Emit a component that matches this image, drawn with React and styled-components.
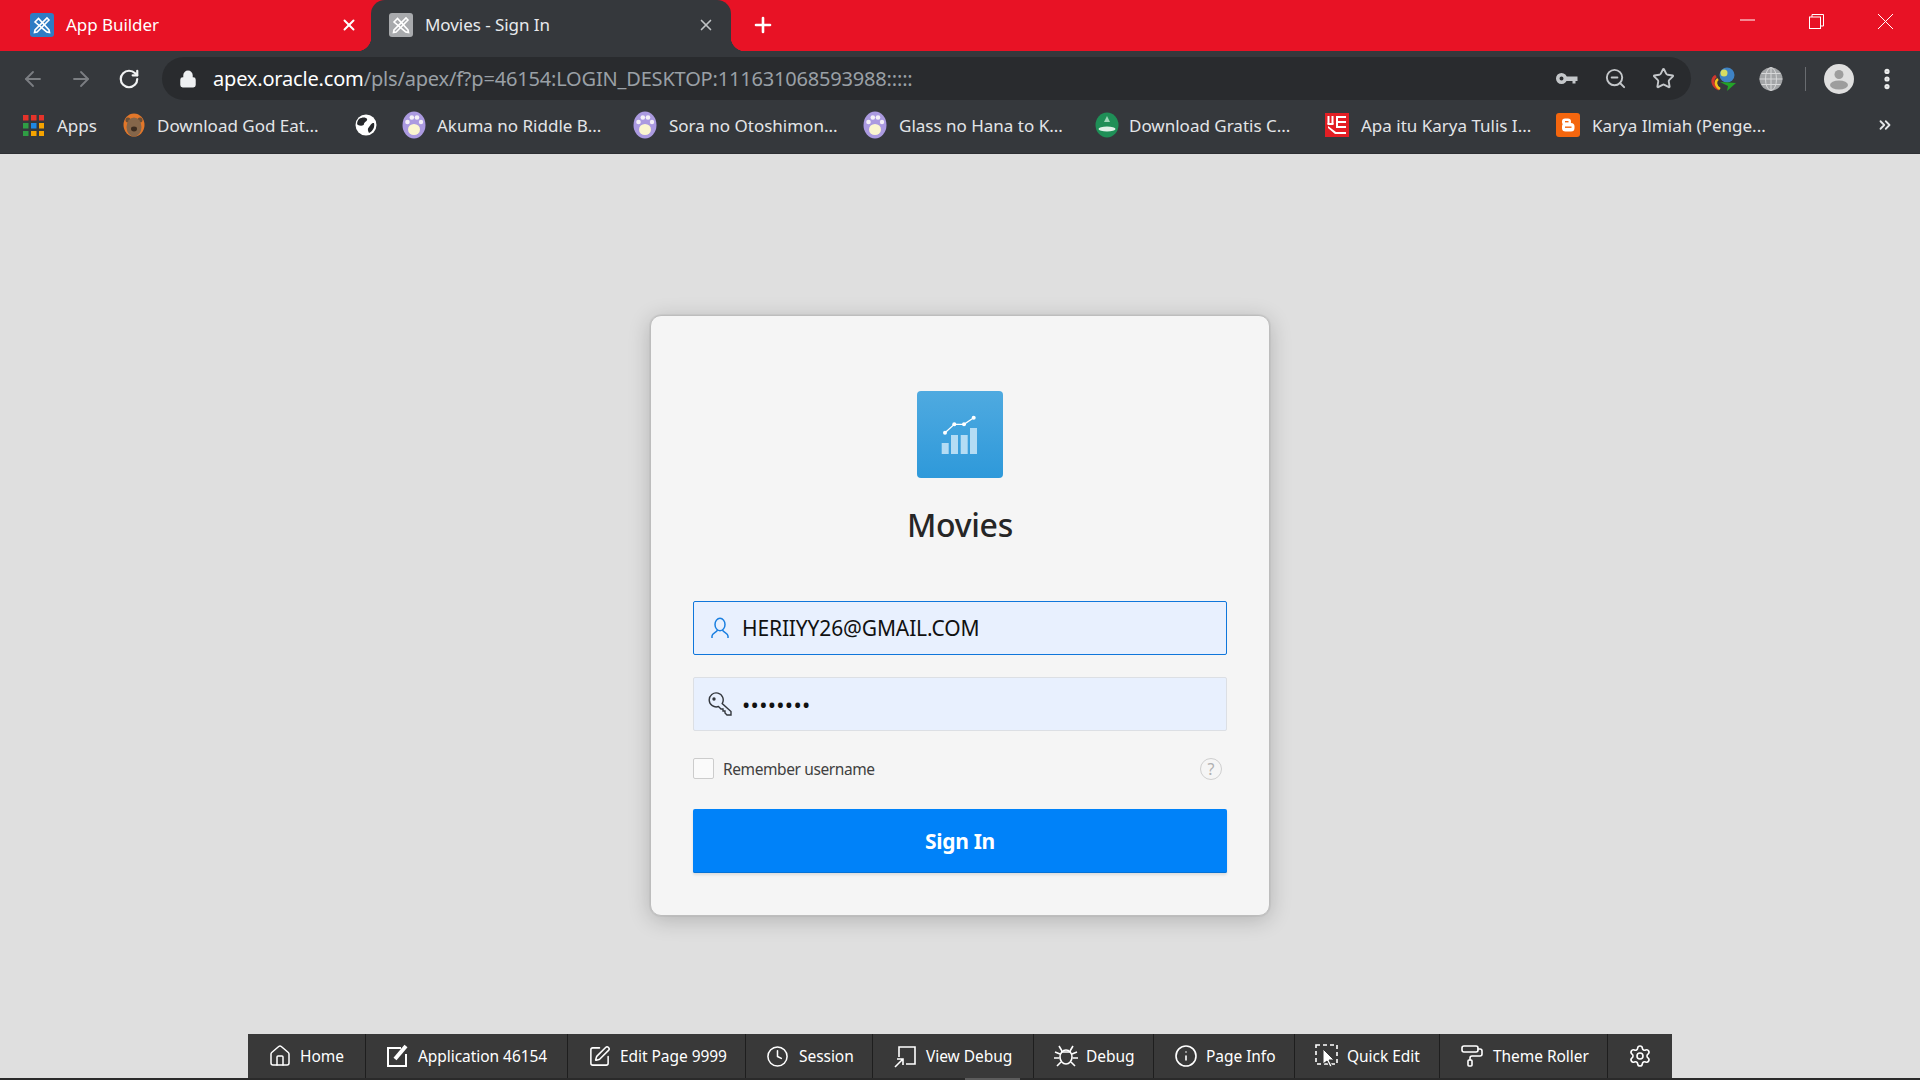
import React from 'react';
import styled, { createGlobalStyle } from 'styled-components';
import { ArrowLeft, ArrowRight, RotateCw, Lock, X, Plus, Star, ZoomOut, EllipsisVertical, ChevronsRight, House, SquarePen, Clock, Info, PaintRoller, Settings } from 'lucide-react';

const GlobalStyle = createGlobalStyle`
html, body {
    margin: 0;
    padding: 0;
    height: 100%;
    overflow: hidden;
    background: #dfdfdf;
    font-family: "Noto Sans", "Open Sans", sans-serif;
}
* { box-sizing: border-box; }
svg { flex-shrink: 0; }
`;

const Page = styled.div`
display: flex;
flex-direction: column;
width: 1920px;
height: 1080px;
`;

/* browser chrome */
const TabStrip = styled.div`
display: flex;
align-items: stretch;
height: 51px;
background: #e81225;
flex-shrink: 0;
`;
const Tab = styled.div`
position: relative;
display: flex;
align-items: center;
gap: 12px;
width: ${({ $w }) => $w}px;
padding: 0 ${({ $right }) => $right}px 2px ${({ $left }) => $left}px;
color: #fff;
font-size: 17px;
letter-spacing: -0.05px;
${({ $active }) => $active && `
    background: #35383c;
    border-radius: 14px 14px 0 0;
    color: #e8eaed;
    &::before, &::after {
        content: '';
        position: absolute;
        bottom: 0;
        width: 14px;
        height: 14px;
    }
    &::before {
        left: -14px;
        background: radial-gradient(circle at 0 0, transparent 14px, #35383c 14.5px);
    }
    &::after {
        right: -14px;
        background: radial-gradient(circle at 100% 0, transparent 14px, #35383c 14.5px);
    }
`}
`;
const TabTitle = styled.span`
flex: 1;
white-space: nowrap;
`;
const NewTab = styled.div`
display: flex;
align-items: center;
margin-left: 20px;
padding-bottom: 2px;
color: #fff;
`;
const WindowControls = styled.div`
display: flex;
align-items: flex-start;
margin-left: auto;
padding: 14px 27px 0 0;
gap: 54px;
color: #fff;
`;
const Toolbar = styled.div`
display: flex;
align-items: center;
height: 49px;
background: #35383c;
padding: 6px 0 0 21px;
flex-shrink: 0;
`;
const NavButton = styled.div`
display: flex;
justify-content: center;
width: 24px;
margin-right: 24px;
color: ${({ $on }) => ($on ? '#f1f3f4' : '#7b7e82')};
`;
const Omnibox = styled.div`
display: flex;
align-items: center;
width: 1529px;
height: 43px;
margin-left: -3px;
padding: 0 4px 0 17px;
background: #292b2e;
border-radius: 22px;
`;
const Url = styled.div`
flex: 1;
margin-left: 16px;
font-size: 20px;
letter-spacing: -0.18px;
color: #9aa0a6;
white-space: nowrap;
`;
const Host = styled.span`
color: #fff;
`;
const OmniIcon = styled.div`
display: flex;
justify-content: center;
width: 48px;
color: #c4c7ca;
`;
const Extensions = styled.div`
display: flex;
align-items: center;
margin-left: 20px;
gap: 22px;
`;
const Divider = styled.div`
width: 1px;
height: 24px;
margin-right: -4px;
background: #696c70;
`;
const MenuDots = styled.div`
display: flex;
margin-left: 20px;
color: #eceded;
`;
const Bookmarks = styled.div`
display: flex;
align-items: center;
height: 54px;
padding: 0 0 3px 23px;
background: #35383c;
border-bottom: 1px solid #2d2f33;
flex-shrink: 0;
`;
const Bookmark = styled.div`
display: flex;
align-items: center;
gap: ${({ $gap }) => $gap}px;
width: ${({ $w }) => $w}px;
color: #e3e5e8;
font-size: 17px;
letter-spacing: 0;
white-space: nowrap;
`;
const More = styled.div`
display: flex;
margin-left: auto;
padding-right: 26px;
color: #e3e5e8;
`;

/* login */
const Main = styled.main`
flex: 1;
display: flex;
flex-direction: column;
align-items: center;
padding-top: 161px;
background: #dfdfdf;
`;
const Card = styled.div`
width: 620px;
height: 601px;
padding: 75px 42px 0;
background: #f5f5f5;
border: 1px solid #bdbdbd;
border-radius: 11px;
box-shadow: 0 0 0 1px rgba(0, 0, 0, 0.04), 0 4px 22px rgba(0, 0, 0, 0.2);
display: flex;
flex-direction: column;
`;
const LogoBox = styled.div`
display: flex;
align-self: center;
width: 86px;
height: 87px;
border-radius: 4px;
background: linear-gradient(#4faae0, #2e99da);
`;
const Title = styled.h1`
margin: 23px 0 52px;
height: 48px;
line-height: 48px;
text-align: center;
font-size: 32px;
font-weight: 500;
letter-spacing: -0.3px;
color: #262626;
`;
const Field = styled.div`
display: flex;
align-items: center;
gap: 10px;
height: 54px;
margin-bottom: 22px;
padding-left: 14px;
background: #e8f0fe;
border: 1px solid ${({ $focus }) => ($focus ? '#0f76db' : '#dcdfe4')};
border-radius: 2px;
`;
const FieldIcon = styled.div`
display: flex;
justify-content: center;
width: 24px;
`;
const Input = styled.input`
flex: 1;
min-width: 0;
border: 0;
outline: 0;
padding: 0;
background: transparent;
font-family: inherit;
font-size: 21px;
letter-spacing: -0.14px;
color: #111;
&[type='password'] {
    font-size: 22px;
    letter-spacing: 0.3px;
}
`;
const Remember = styled.div`
display: flex;
align-items: center;
height: 21px;
margin-top: 5px;
`;
const Checkbox = styled.div`
width: 21px;
height: 21px;
border: 1px solid #cccccc;
border-radius: 2px;
background: #fafafa;
`;
const RememberLabel = styled.span`
margin-left: 9px;
font-size: 15.5px;
letter-spacing: -0.4px;
color: #404040;
`;
const Help = styled.div`
display: flex;
align-items: center;
justify-content: center;
width: 22px;
height: 22px;
margin: 0 5px 0 auto;
border: 1.5px solid #cfcfcf;
border-radius: 50%;
font-size: 16px;
color: #b0b0b0;
`;
const SignIn = styled.button`
height: 64px;
margin-top: 30px;
border: 0;
border-radius: 2px;
background: #0082f9;
box-shadow: 0 -1px 0 #0572d6 inset, 0 2px 3px rgba(0, 0, 0, 0.1);
color: #fff;
font-family: inherit;
font-size: 21px;
font-weight: 700;
letter-spacing: -0.3px;
`;

/* developer bar */
const DevBar = styled.div`
display: flex;
align-self: center;
width: 1424px;
height: 44px;
background: #393939;
flex-shrink: 0;
`;
const DevItem = styled.div`
display: flex;
align-items: center;
gap: ${({ $gap }) => $gap}px;
width: ${({ $w }) => $w}px;
padding-left: 20px;
border-right: 1px solid #1e1e1e;
color: #fff;
font-size: 15.5px;
letter-spacing: -0.05px;
white-space: nowrap;
&:last-child { border-right: 0; }
`;
const ScrollTrack = styled.div`
height: 2px;
background: #2a2a2a;
flex-shrink: 0;
`;
const ScrollThumb = styled.div`
width: 55px;
height: 2px;
margin-left: 965px;
background: #5c5c5c;
`;

const AppIcon = ({ grey }) => (
    <svg width="24" height="24" viewBox="0 0 24 24">
        <rect width="24" height="24" rx="3" fill={grey ? '#a8aaad' : '#2e7cc4'} />
        <g stroke="#fff" strokeWidth="1.6" fill="none" strokeLinecap="round">
            <path d="M5 9 8.5 5.5 19 17l.5 2.5-2.8-.6z" />
            <path d="M19 7 17 5 5 17l-.5 2.5 2.6-.5L19 7z" />
        </g>
    </svg>
);

const Paw = () => (
    <svg width="24" height="28" viewBox="0 0 24 28">
        <ellipse cx="12" cy="14" rx="11.5" ry="13.5" fill="#ab9ae0" />
        <ellipse cx="12" cy="18.5" rx="6" ry="5.500" fill="#fbf6cf" />
        <circle cx="5.500" cy="11" r="2.300" fill="#f4f0f6" />
        <circle cx="9.800" cy="6.500" r="2.300" fill="#f4f0f6" />
        <circle cx="15" cy="6.500" r="2.300" fill="#f4f0f6" />
        <circle cx="19" cy="11" r="2.200" fill="#f4f0f6" />
    </svg>
);

const AppsGrid = () => {
    const colors = ['#e5332a', '#e5332a', '#e5332a', '#2f9e44', '#1e88e5', '#f5a300', '#2f9e44', '#f5a300', '#f5a300'];
    return (
        <svg width="21" height="21" viewBox="0 0 21 21">
            {colors.map((c, i) => (
                <rect key={i} x={(i % 3) * 8} y={Math.floor(i / 3) * 8} width="5.5" height="5.5" fill={c} />
            ))}
        </svg>
    );
};

const Bear = () => (
    <svg width="22" height="24" viewBox="0 0 22 24">
        <ellipse cx="11" cy="12" rx="10.5" ry="11.5" fill="#e2772a" />
        <circle cx="5" cy="7" r="2.5" fill="#6d5037" />
        <circle cx="17" cy="7" r="2.5" fill="#6d5037" />
        <ellipse cx="11" cy="14" rx="7.5" ry="9.5" fill="#85664a" />
        <ellipse cx="11" cy="16" rx="3" ry="2.4" fill="#3c2c20" />
    </svg>
);

const GlobeBlob = () => (
    <svg width="22" height="22" viewBox="0 0 22 22">
        <circle cx="11" cy="11" r="10.5" fill="#fff" />
        <path d="M4 5c3-2 7-2 8 0s-3 3-3 5-4 2-6 1 0-5 1-6zM19 9c1 4-1 8-5 10-1-2-2-4 0-6s2-4 5-4z" fill="#26282b" />
    </svg>
);

const GreenBadge = () => (
    <svg width="24" height="26" viewBox="0 0 24 26">
        <ellipse cx="12" cy="13" rx="11.5" ry="12.5" fill="#1f8f57" />
        <ellipse cx="12" cy="17" rx="8.500" ry="2.400" fill="#dff0e7" />
        <path d="M12 4l3 6h-6z" fill="#9fd6b9" />
    </svg>
);

const RedLogo = () => (
    <svg width="24" height="24" viewBox="0 0 24 24">
        <rect width="24" height="24" fill="#e31e24" />
        <g fill="#fff">
            <rect x="2.5" y="3" width="2" height="8" />
            <rect x="6.5" y="3" width="2" height="8" />
            <rect x="2.5" y="10" width="6" height="2" />
            <rect x="11" y="3" width="2" height="10" />
            <rect x="11" y="3" width="10" height="2" />
            <rect x="11" y="8" width="10" height="2" />
            <rect x="11" y="13" width="10" height="2" />
            <path d="M3 13l8 6h10v2H10L3 15z" />
        </g>
    </svg>
);

const Blogger = () => (
    <svg width="24" height="24" viewBox="0 0 24 24">
        <rect width="24" height="24" rx="3" fill="#f4660e" />
        <rect x="6" y="5.5" width="9" height="6.5" rx="3" fill="#fff" />
        <rect x="6" y="10" width="12.5" height="8.5" rx="3.5" fill="#fff" />
        <rect x="9" y="8" width="3.5" height="1.4" fill="#f4660e" />
        <rect x="9" y="13.5" width="6.5" height="1.4" fill="#f4660e" />
    </svg>
);

const KeyGlyph = () => (
    <svg width="22" height="12" viewBox="0 0 22 12">
        <path d="M5.5 0a5.5 5.5 0 1 1-.01 11A5.5 5.5 0 0 1 5.500 0zM5.500 3.500a2 2 0 1 0 .01 4 2 2 0 0 0-.01-4z" fill="#c4c7ca" fillRule="evenodd" />
        <path d="M10 3.500h11.500V8h-2v2.500h-3V8H10z" fill="#c4c7ca" />
    </svg>
);

const IdmIcon = () => (
    <svg width="26" height="26" viewBox="0 0 26 26">
        <path d="M8 23C1 20 0 13 5 10" fill="none" stroke="#d1382e" strokeWidth="3" />
        <path d="M9 23C4 20 4 15 7 13" fill="none" stroke="#f3c21b" strokeWidth="2.500" />
        <circle cx="16" cy="9" r="7.500" fill="#3e82c4" />
        <circle cx="13" cy="7" r="3.500" fill="#d8dd62" />
        <path d="M9 16l16 1-9 8 1-5z" fill="#23a428" />
    </svg>
);

const GlobeGrey = () => (
    <svg width="24" height="24" viewBox="0 0 24 24" fill="none">
        <circle cx="12" cy="12" r="11.500" fill="#a3a5a7" />
        <g stroke="#d7d8d9" strokeWidth="1">
            <ellipse cx="12" cy="12" rx="5.500" ry="11.500" />
            <path d="M12 .5v23M.5 12h23M2.500 6.500h19M2.500 17.500h19" />
        </g>
    </svg>
);

const Avatar = () => (
    <svg width="30" height="30" viewBox="0 0 30 30">
        <circle cx="15" cy="15" r="15" fill="#dfdfdf" />
        <circle cx="15" cy="10.500" r="4.500" fill="#9d9d9d" />
        <ellipse cx="15" cy="21" rx="9" ry="4.500" fill="#9d9d9d" />
    </svg>
);

const ChartLogo = () => (
    <svg width="86" height="87" viewBox="0 0 86 87">
        <g fill="#b4dcf4">
            <rect x="24.700" y="52" width="7" height="11" />
            <rect x="34" y="44" width="7" height="19" />
            <rect x="43.700" y="44" width="7" height="19" />
            <rect x="53" y="37" width="7" height="26" />
        </g>
        <path d="M28 41.700 37.300 33.300H47L56.700 26.700" fill="none" stroke="#fff" strokeWidth="1.300" />
        <g fill="#fff">
            <circle cx="28" cy="41.700" r="2" />
            <circle cx="37.300" cy="33.300" r="2" />
            <circle cx="47" cy="33.300" r="2" />
            <circle cx="56.700" cy="26.700" r="2" />
        </g>
    </svg>
);

const UserIcon = () => (
    <svg width="18" height="22" viewBox="0 0 18 22" fill="none" stroke="#1a7fe0" strokeWidth="1.500">
        <ellipse cx="9" cy="7.500" rx="5" ry="6.200" />
        <path d="M1 21v-2c0-3 4.500-3.500 5.500-6M17 21v-2c0-3-4.500-3.500-5.500-6" />
    </svg>
);

const KeyOutline = () => (
    <svg width="24" height="24" viewBox="0 0 24 24" fill="none" stroke="#33373d" strokeWidth="1.400">
        <path d="M14.200 11.500A7 7 0 1 0 10.500 14.500L13 17H15V19H17V21L19 23H23V19.500Z" />
        <circle cx="6" cy="7" r="1" fill="#33373d" />
    </svg>
);

const AppEditIcon = () => (
    <svg width="24" height="24" viewBox="0 0 24 24" fill="none" stroke="#fff">
        <path d="M15 4H2v18h18V10" strokeWidth="2" />
        <path d="M9 15 20 2" strokeWidth="4" />
    </svg>
);

const ViewDebugIcon = () => (
    <svg width="24" height="24" viewBox="0 0 24 24" fill="none" stroke="#fff" strokeWidth="1.600">
        <path d="M6 13V3h16v17H13" />
        <path d="M2 23 10 15M4 15h6v6" />
    </svg>
);

const BugIcon = () => (
    <svg width="24" height="24" viewBox="0 0 24 24" fill="none" stroke="#fff" strokeWidth="1.600">
        <ellipse cx="12" cy="13" rx="6" ry="7" />
        <path d="M8 7 5 2M16 7l3-5M6 10 1 8M18 10l5-2M5.500 14H0M18.500 14H24M7 18l-4 4M17 18l4 4M7 8h10" />
    </svg>
);

const QuickEditIcon = () => (
    <svg width="24" height="24" viewBox="0 0 24 24" fill="none">
        <rect x="1" y="1" width="21" height="19" stroke="#fff" strokeWidth="1.600" strokeDasharray="4 3" />
        <path d="M8 5v15l4-3 3 6 2-1-3-6h5z" fill="#fff" stroke="#393939" />
    </svg>
);

const bookmarks = [
    { w: 232, gap: 12, icon: <Bear />, label: 'Download God Eat...' },
    { w: 47, gap: 0, icon: <GlobeBlob /> },
    { w: 231, gap: 11, icon: <Paw />, label: 'Akuma no Riddle B...' },
    { w: 230, gap: 12, icon: <Paw />, label: 'Sora no Otoshimon...' },
    { w: 232, gap: 12, icon: <Paw />, label: 'Glass no Hana to K...' },
    { w: 230, gap: 10, icon: <GreenBadge />, label: 'Download Gratis C...' },
    { w: 231, gap: 12, icon: <RedLogo />, label: 'Apa itu Karya Tulis I...' },
    { w: 214, gap: 12, icon: <Blogger />, label: 'Karya Ilmiah (Penge...' },
];

const devItems = [
    { w: 118, gap: 8, icon: <House size={24} strokeWidth={1.5} />, label: 'Home' },
    { w: 202, gap: 8, icon: <AppEditIcon />, label: 'Application 46154' },
    { w: 178, gap: 9, icon: <SquarePen size={23} strokeWidth={1.6} />, label: 'Edit Page 9999' },
    { w: 127, gap: 10, icon: <Clock size={23} strokeWidth={1.6} />, label: 'Session' },
    { w: 161, gap: 9, icon: <ViewDebugIcon />, label: 'View Debug' },
    { w: 120, gap: 8, icon: <BugIcon />, label: 'Debug' },
    { w: 141, gap: 8, icon: <Info size={24} strokeWidth={1.6} />, label: 'Page Info' },
    { w: 145, gap: 8, icon: <QuickEditIcon />, label: 'Quick Edit' },
    { w: 168, gap: 9, icon: <PaintRoller size={24} strokeWidth={1.6} />, label: 'Theme Roller' },
    { w: 64, gap: 0, icon: <Settings size={24} strokeWidth={1.6} /> },
];

const App = () => (
    <Page>
        <GlobalStyle />
        <TabStrip>
            <Tab $w={371} $left={30} $right={13}>
                <AppIcon />
                <TabTitle>App Builder</TabTitle>
                <X size={18} strokeWidth={2.6} />
            </Tab>
            <Tab $active $w={360} $left={18} $right={16}>
                <AppIcon grey />
                <TabTitle>Movies - Sign In</TabTitle>
                <X size={18} strokeWidth={2.2} color="#c0c3c6" />
            </Tab>
            <NewTab><Plus size={24} strokeWidth={2.6} /></NewTab>
            <WindowControls>
                <svg width="15" height="15" viewBox="0 0 15 15"><path d="M0 6h15" stroke="#fff" /></svg>
                <svg width="15" height="15" viewBox="0 0 15 15" fill="none" stroke="#fff"><path d="M3 3V.5h11.500V12H12" /><rect x=".5" y="3" width="11" height="11.500" /></svg>
                <svg width="15" height="15" viewBox="0 0 15 15"><path d="M0 0l15 15M15 0 0 15" stroke="#fff" /></svg>
            </WindowControls>
        </TabStrip>
        <Toolbar>
            <NavButton><ArrowLeft size={24} strokeWidth={1.8} /></NavButton>
            <NavButton><ArrowRight size={24} strokeWidth={1.8} /></NavButton>
            <NavButton $on><RotateCw size={22} strokeWidth={2.4} /></NavButton>
            <Omnibox>
                <Lock size={18} strokeWidth={2.6} color="#eef0f2" fill="#eef0f2" />
                <Url><Host>apex.oracle.com</Host>/pls/apex/f?p=46154:LOGIN_DESKTOP:111631068593988:::::</Url>
                <OmniIcon><KeyGlyph /></OmniIcon>
                <OmniIcon><ZoomOut size={23} strokeWidth={2} /></OmniIcon>
                <OmniIcon><Star size={23} strokeWidth={2} /></OmniIcon>
            </Omnibox>
            <Extensions>
                <IdmIcon />
                <GlobeGrey />
                <Divider />
                <Avatar />
            </Extensions>
            <MenuDots><EllipsisVertical size={26} strokeWidth={2.8} /></MenuDots>
        </Toolbar>
        <Bookmarks>
            <Bookmark $w={100} $gap={13}><AppsGrid />Apps</Bookmark>
            {bookmarks.map((b, i) => (
                <Bookmark key={i} $w={b.w} $gap={b.gap}>{b.icon}{b.label}</Bookmark>
            ))}
            <More><ChevronsRight size={18} strokeWidth={2.4} /></More>
        </Bookmarks>
        <Main>
            <Card>
                <LogoBox><ChartLogo /></LogoBox>
                <Title>Movies</Title>
                <Field $focus>
                    <FieldIcon><UserIcon /></FieldIcon>
                    <Input type="text" defaultValue="HERIIYY26@GMAIL.COM" />
                </Field>
                <Field>
                    <FieldIcon><KeyOutline /></FieldIcon>
                    <Input type="password" defaultValue="12345678" />
                </Field>
                <Remember>
                    <Checkbox />
                    <RememberLabel>Remember username</RememberLabel>
                    <Help>?</Help>
                </Remember>
                <SignIn>Sign In</SignIn>
            </Card>
        </Main>
        <DevBar>
            {devItems.map((d) => (
                <DevItem key={d.w} $w={d.w} $gap={d.gap}>{d.icon}{d.label}</DevItem>
            ))}
        </DevBar>
        <ScrollTrack><ScrollThumb /></ScrollTrack>
    </Page>
);

export default App;
